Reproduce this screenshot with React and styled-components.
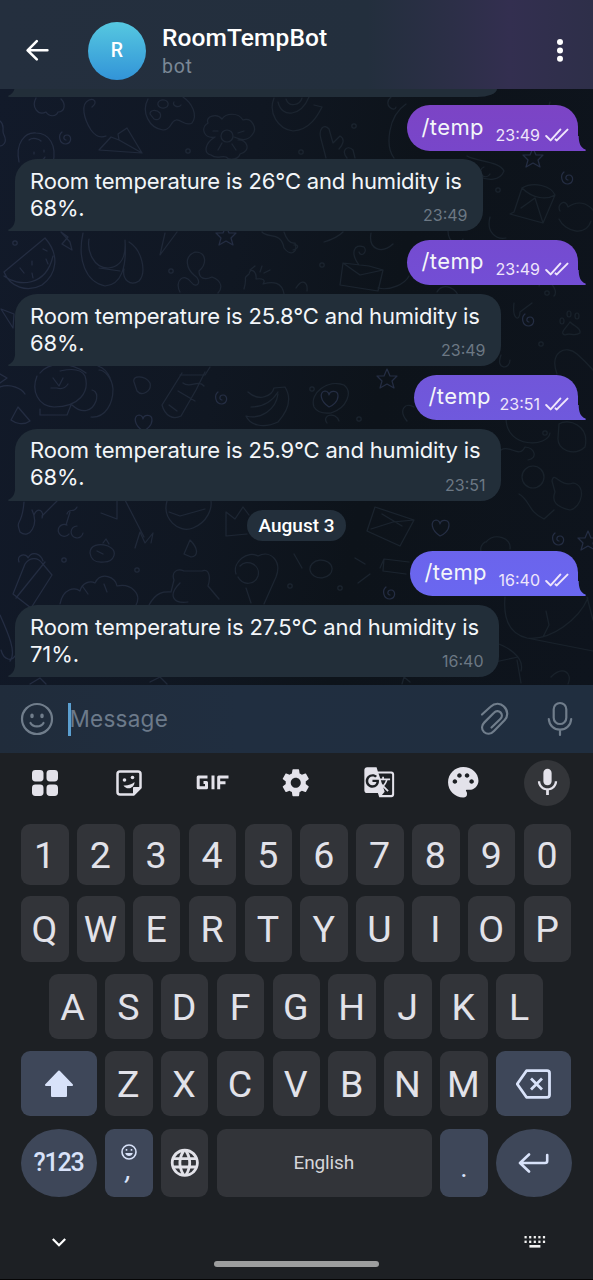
import React from "react";
import styled, { createGlobalStyle } from "styled-components";
import { MdSettings, MdPalette, MdGTranslate, MdMic, MdLanguage } from "react-icons/md";

const GlobalStyle = createGlobalStyle`
  * { box-sizing: border-box; }
  body { margin: 0; background: #1d2024; }
`;

const chatFont = `Inter, "Noto Sans", sans-serif`;
const systemFont = `Roboto, "Liberation Sans", sans-serif`;

const Screen = styled.div`
  width: 593px;
  height: 1280px;
  display: flex;
  flex-direction: column;
  overflow: hidden;
  background: #1d2024;
  font-family: ${chatFont};
`;

/* ---------- header ---------- */

const Header = styled.header`
  height: 89px;
  flex: none;
  display: flex;
  align-items: center;
  padding: 12px 18px 0 22px;
  background: linear-gradient(90deg, #242f3e 0%, #232f3d 62%, #2c2f47 76%, #332f50 86%, #2e2f49 100%);
`;

const HeaderIcon = styled.svg`
  width: ${(p) => p.$w}px;
  height: 32px;
  flex: none;
`;

const Avatar = styled.div`
  width: 58px;
  height: 58px;
  margin-left: 34px;
  border-radius: 50%;
  display: flex;
  align-items: center;
  justify-content: center;
  background: linear-gradient(#56c8e0, #3294d8);
  color: #fff;
  font: 500 19.5px/1 ${systemFont};
`;

const Identity = styled.div`
  flex: 1;
  margin-left: 16px;
  display: flex;
  flex-direction: column;
`;

const Title = styled.div`
  font: 500 24.5px/30px ${systemFont};
  letter-spacing: 0.1px;
  color: #fff;
`;

const Subtitle = styled.div`
  font: 400 19.5px/25px ${systemFont};
  letter-spacing: 0.7px;
  margin-top: 1px;
  margin-bottom: -1px;
  color: #7b8896;
`;

/* ---------- chat ---------- */

const Chat = styled.main`
  position: relative;
  height: 595.5px;
  flex: none;
  overflow: hidden;
  background: linear-gradient(100deg, #121a2a 0%, #101722 38%, #0d131a 62%, #0e141d 100%);
`;

const Wallpaper = styled.svg`
  position: absolute;
  inset: 0;
  width: 593px;
  height: 596px;
`;

const Messages = styled.div`
  position: relative;
  display: flex;
  flex-direction: column;
  gap: 8.7px;
  padding: 0 15px;
`;

const Bubble = styled.div`
  position: relative;
  display: flex;
  width: ${(p) => p.$w}px;
`;

const Incoming = styled(Bubble)`
  align-self: flex-start;
  height: 71.8px;
  padding: 8.5px 0 0 15px;
  border-radius: 22px 20px 20px 0;
  background: #222e39;
`;

const Outgoing = styled(Bubble)`
  align-self: flex-end;
  height: 45.5px;
  justify-content: space-between;
  padding: 8.5px 9px 0 14.5px;
  border-radius: 23px 22px 0 23px;
  background: ${(p) => p.$color};
`;

const PreviousBubble = styled.div`
  position: relative;
  width: 482px;
  height: 7.5px;
  border-radius: 0 0 20px 0 / 0 0 8px 0;
  background: #222e39;
`;

const TailShape = styled.svg`
  position: absolute;
  bottom: 0;
  width: 8px;
  height: 15px;
  ${(p) => (p.$side === "left" ? "left: -7.5px;" : "right: -7.5px; transform: scaleX(-1);")}
`;

const Body = styled.div`
  font-size: 22px;
  line-height: 27px;
  letter-spacing: ${(p) => p.$ls || 0}px;
  color: #f3f6f9;
  white-space: nowrap;
`;

const Line = styled.div`
  width: max-content;
`;

const Stamp = styled.div`
  font-size: 16px;
  line-height: 20px;
  white-space: nowrap;
`;

const IncomingStamp = styled(Stamp)`
  position: absolute;
  right: 15.5px;
  bottom: 6px;
  color: #6c7884;
`;

const OutgoingMeta = styled.div`
  display: flex;
  align-items: center;
  gap: 5px;
  height: 20px;
  margin-top: 11px;
  color: #efe6fb;
`;

const DatePill = styled.div`
  align-self: center;
  width: 99px;
  height: 31px;
  margin: 1px 0;
  border-radius: 16px;
  background: #232f3b;
  color: #fff;
  text-align: center;
  font: 500 19px/31px ${systemFont};
`;

/* ---------- composer ---------- */

const Composer = styled.div`
  height: 68px;
  flex: none;
  display: flex;
  align-items: center;
  padding: 1.5px 20px 0 20px;
  background: linear-gradient(90deg, #202c3b, #202e40 40%, #202e3f);
`;

const ComposerIcon = styled.svg`
  width: ${(p) => p.$w}px;
  height: 36px;
  flex: none;
  fill: none;
  stroke: #707d8b;
  stroke-width: 2.2;
  stroke-linecap: round;
  stroke-linejoin: round;
`;

const ClipIcon = styled(ComposerIcon)`
  margin-right: 37px;
`;

const Caret = styled.div`
  width: 3px;
  height: 33px;
  margin-left: 14px;
  background: #5b9fd0;
`;

const Placeholder = styled.div`
  flex: 1;
  margin-left: -1.5px;
  font-size: 22.5px;
  line-height: 30px;
  letter-spacing: 0.25px;
  color: #6c7a8a;
`;

/* ---------- keyboard ---------- */

const Keyboard = styled.section`
  flex: 1;
  display: flex;
  flex-direction: column;
  background: #1d2024;
  border-bottom: 1px solid #050506;
`;

const Toolbar = styled.div`
  display: flex;
  justify-content: space-between;
  padding: 7px 23px 0;
  color: #e3e2ea;
`;

const Tool = styled.div`
  width: 46px;
  height: 46px;
  display: flex;
  align-items: center;
  justify-content: center;
  padding-right: ${(p) => (p.$active ? 0 : 1.4)}px;
  border-radius: 50%;
  background: ${(p) => (p.$active ? "#333539" : "transparent")};
`;

const KeyRow = styled.div`
  display: flex;
  padding-left: ${(p) => p.$inset || 21.2}px;
  gap: 8.3px;
  height: ${(p) => p.$h}px;
  margin-top: ${(p) => p.$top}px;
`;

const Key = styled.div`
  width: ${(p) => p.$w || 47.55}px;
  flex: none;
  display: flex;
  flex-direction: column;
  align-items: center;
  justify-content: center;
  border-radius: ${(p) => (p.$round ? "38px / 34px" : "9px")};
  background: ${(p) => (p.$accent ? "#3e4759" : "#323439")};
  color: ${(p) => (p.$accent ? "#d8e2f9" : "#e2e2e9")};
  font-family: ${systemFont};
  font-size: 37.5px;
  line-height: 1;
`;

const CharKey = styled(Key)`
  padding: 2.5px 1px 0 0;
`;

const SmallLabel = styled.span`
  font-size: 19px;
  letter-spacing: -0.15px;
  margin-right: 1px;
  color: #d5d6da;
`;

const ModeLabel = styled.span`
  font-size: 25px;
  font-weight: 500;
  letter-spacing: -1.2px;
  margin-right: 1px;
`;

const Comma = styled.span`
  font-size: 28px;
  line-height: 24px;
  margin-top: -2px;
  font-style: italic;
`;

const Period = styled.span`
  margin-top: 10px;
  font-size: 28px;
`;

const SystemNav = styled.div`
  display: flex;
  justify-content: space-between;
  padding: 0 47.5px 0 51px;
  margin-top: 36px;
`;

const HomeBar = styled.div`
  align-self: center;
  width: 165px;
  height: 6px;
  margin-top: 10px;
  border-radius: 3px;
  background: #9d9e9f;
`;

function Tail({ side, color }) {
  return (
    <TailShape $side={side} viewBox="0 0 8 15">
      <path d="M7.3 0C7.3 7 5.5 11.5 .6 13.6C-.1 14 .1 15 1 15H8V0Z" fill={color} />
    </TailShape>
  );
}

function Ticks() {
  return (
    <svg width="24" height="14" viewBox="0 0 24 14" fill="none" stroke="currentColor" strokeWidth="2" strokeLinecap="round" strokeLinejoin="round">
      <path d="M1.2 8L5.6 12.4L15.3 1.6M10.6 11.4L11.8 12.4L22.5 1.6" />
    </svg>
  );
}

function Reply({ width, lines, time, spacing = -0.17 }) {
  return (
    <Incoming $w={width}>
      <Tail side="left" color="#222e39" />
      <Body $ls={spacing}>
        {lines.map((line) => (
          <Line key={line}>{line}</Line>
        ))}
      </Body>
      <IncomingStamp>{time}</IncomingStamp>
    </Incoming>
  );
}

function Command({ width, color, end = color, time }) {
  return (
    <Outgoing $w={width} $color={`linear-gradient(${color}, ${end})`}>
      <Tail side="right" color={end} />
      <Body $ls={0.4}>/temp</Body>
      <OutgoingMeta>
        <Stamp>{time}</Stamp>
        <Ticks />
      </OutgoingMeta>
    </Outgoing>
  );
}

const spirals = [[66, 139], [222, 399], [568, 179], [529, 321], [559, 540], [390, 594]];
const dots = [[188, 151], [15, 243], [171, 271], [354, 126], [301, 152], [498, 190], [322, 265], [64, 560], [137, 570], [290, 586], [340, 588], [545, 433], [359, 419], [312, 389], [541, 344], [547, 293]];
const stars = [[226, 236], [387, 379], [533, 158], [588, 541]];
const hearts = [[329, 399], [440, 528], [143, 423]];

function Doodles() {
  return (
    <Wallpaper viewBox="0 89 593 596" fill="none" strokeWidth="1.2" strokeLinecap="round" strokeLinejoin="round">
      <defs>
        <linearGradient id="ink" x1="0" x2="593" y1="0" y2="0" gradientUnits="userSpaceOnUse">
          <stop offset="0" stopColor="#242d43" />
          <stop offset="0.5" stopColor="#1b242f" />
          <stop offset="1" stopColor="#18212a" />
        </linearGradient>
      </defs>
      <g stroke="url(#ink)">
        {spirals.map(([x, y]) => (
          <path key={x} transform={`translate(${x} ${y})`} d="M0 1C-3 1 -3 -4 1 -4C6 -4 6 4 0 5C-7 5 -8 -4 -4 -7" />
        ))}
        {dots.map(([x, y]) => (
          <circle key={x + y} cx={x} cy={y} r="2.2" />
        ))}
        {stars.map(([x, y]) => (
          <path key={x} transform={`translate(${x} ${y})`} d="M0 -10L3 -3L10 -3L5 2L7 9L0 5L-7 9L-5 2L-10 -3L-3 -3Z" />
        ))}
        {hearts.map(([x, y]) => (
          <path key={x} transform={`translate(${x} ${y})`} d="M0 8C-9 2 -10 -7 -4 -8C-1 -8 0 -5 0 -4C1 -9 9 -9 9 -3C9 3 3 7 0 8Z" />
        ))}
        {/* ghost, flower, feather and paper plane */}
        <path d="M19 162C15 143 25 132 36 133C49 133 57 145 53 163M29 140C33 137 39 139 41 141M34 152V154M44 150V152M35 160C39 162 44 160 45 157" />
        <path d="M36 98C31 107 38 116 46 112C49 117 56 117 58 112C65 112 66 104 61 99M92 107C98 102 94 98 89 100C80 104 84 119 91 130C96 137 101 138 106 136M99 150L142 153L127 128L118 134L119 140L111 137ZM119 140L142 153" />
        {/* palette */}
        <path d="M148 99C141 112 149 128 163 130C172 130 170 121 176 120C181 119 186 127 192 123C198 115 192 103 183 97M150 114C150 110 156 109 160 113C162 118 158 121 154 119ZM158 103A5 4 0 1 0 168 105A5 4 0 1 0 158 103M174 102A4 3 0 1 0 181 105" />
        {/* blossom */}
        <path d="M215 137C204 139 200 128 208 123C205 116 217 113 222 119C226 113 238 112 243 120C252 117 258 129 252 135C245 144 236 137 234 137M215 137C205 143 203 153 211 155C217 160 222 155 226 157C231 162 239 158 240 154C252 151 247 139 238 140M221 136A6 6 0 1 0 233 136A6 6 0 1 0 221 136M213 131H218M238 133L244 131M222 143L218 150M232 144L236 150" />
        {/* doughnut and cactus */}
        <path d="M274 98C268 113 278 129 293 131C310 130 318 115 322 107L314 105M278 102C282 119 301 116 309 97M286 99C289 108 300 105 302 98M326 158L321 139C318 129 324 123 329 129L333 143L340 136C346 139 342 146 339 149M347 158C341 151 347 144 353 150L355 158M391 97C382 105 395 113 396 107M394 158C385 146 388 116 406 104M550 102C545 116 560 125 569 111M467 156C478 162 499 161 504 171C500 181 488 181 478 176M484 167A5 5 0 1 0 490 174" />
        {/* watermelon, sweet and hedgehog */}
        <path d="M4 272L45 238C60 255 57 274 42 285C27 293 10 287 4 272ZM4 276C18 287 46 287 53 256M43 249L47 251M32 261V265M46 259L48 264M20 268L24 273M32 273L33 278M61 232L68 237L62 244L72 250L70 242ZM83 233C77 260 86 282 105 286C121 285 127 268 125 240M89 239C87 250 93 268 108 268C122 267 126 255 125 241M129 242C142 250 147 272 139 281C130 287 122 279 124 269M99 268L120 271M165 233L160 255L177 232" />
        {/* balloon figure */}
        <path d="M180 292C174 281 184 272 191 282C197 290 203 281 194 275C187 269 183 257 195 252C207 252 207 264 199 271C199 279 205 280 212 277C223 281 222 289 218 293M244 289C248 275 242 280 249 274C250 267 257 271 256 279C263 278 266 280 263 284C273 281 282 282 284 294M255 266L250 270M262 266L260 272M270 270L264 273M262 232C268 239 281 231 284 248C291 257 298 252 295 243C289 244 286 238 284 232" />
        {/* envelopes and cupcakes */}
        <path d="M343 263L340 285L378 291L383 270L369 266ZM343 263L360 275L383 270M359 265C350 253 354 243 364 247C368 252 361 258 359 252M371 233C368 250 382 254 393 244M378 288C390 291 405 284 409 276M324 242C334 239 341 234 343 232M293 250C300 248 298 244 294 245M296 288C302 278 308 282 307 291M514 212L522 188C534 181 551 186 555 195L543 223L510 214ZM522 188C533 199 547 200 555 195M521 208L535 198L543 223M560 211C556 204 566 198 568 207C578 200 587 203 593 210M559 219C565 232 586 237 591 221M490 217C486 232 496 240 506 238M448 231C448 242 460 250 463 239M539 286C545 272 560 290 554 296" />
        {/* paw print */}
        <path d="M570 322C566 328 559 333 565 335C570 332 574 337 580 333C581 328 575 327 570 322ZM562 318A2 3 0 1 0 562 324A2 3 0 1 0 562 318M569 311A2 3 0 1 0 569 317A2 3 0 1 0 569 311M577 313A2 3 0 1 0 577 319A2 3 0 1 0 577 313" />
        <path d="M557 374C549 352 566 344 577 354C586 362 593 370 593 370M514 303C512 320 520 322 520 312L532 303M501 355C495 370 510 370 510 360" />
        {/* sleeping cat */}
        <path d="M37 376C31 391 38 406 54 407C79 407 90 392 85 376C80 366 65 370 60 371M53 378L59 386L63 378M51 388H57C63 390 66 387 68 384M40 409V415H67L71 405M72 405C82 414 92 412 96 401C99 391 92 390 92 390M91 417C106 418 113 403 113 389C112 377 104 370 99 370M0 387C11 383 22 389 25 394M11 420L18 407L30 421C23 426 15 423 11 420ZM0 374L7 378L0 383" />
        {/* sock, bottle, bananas */}
        <path d="M134 382C132 375 145 375 150 383C152 391 142 397 137 391ZM182 373L162 405C165 416 173 420 181 416L196 390L205 372M183 383C190 389 198 379 204 386M178 391L195 401M169 405L177 411M248 392C259 402 272 396 274 388L285 387C293 400 287 412 278 422C263 429 250 425 246 416C260 420 276 410 278 394M251 407C264 407 273 400 278 392M314 407C309 393 328 379 344 385C353 392 347 408 331 413C322 414 317 412 314 407ZM327 423C321 415 336 411 339 421M407 421C398 410 405 402 414 407" />
        {/* sprout, cherries, burger, crown */}
        <path d="M24 502C22 528 15 518 20 532C30 540 39 524 32 510M34 515C37 506 45 511 42 518M42 516L57 501M67 514C69 507 74 514 77 507M70 512L66 525M67 525A6 6 0 1 0 69 534M77 526A6 6 0 1 0 83 533M117 500V519L101 513M125 500L144 537M135 548L140 532L145 543L153 533L151 543M167 501C162 518 178 534 193 528C208 522 212 508 211 501M169 512L180 516L205 509M226 512L235 519L243 507L249 515M226 512V536L247 534" />
        {/* strawberry faces, cake, cloud, ice cream */}
        <path d="M90 553C90 545 99 543 108 546C119 551 114 562 104 562C96 563 91 560 90 553ZM103 543L106 539L109 544M97 551L103 554M184 554L190 540C198 548 199 556 191 557ZM13 594L25 564C29 558 37 556 42 563L52 575L31 608L13 594ZM19 562C16 554 27 553 28 558C32 550 41 554 43 561M16 598L45 562M60 604C63 588 75 587 80 591C82 583 90 580 95 583C101 571 116 577 117 586C131 583 142 594 136 605M83 587L88 594M104 584L107 592M149 605C157 590 166 592 171 592L174 580C171 572 177 568 184 571H202C209 568 211 577 208 586L219 599M180 583C167 596 174 604 188 602M236 574C232 562 248 550 258 556C271 549 282 562 276 577L264 604M238 577C243 586 255 585 258 576C261 565 247 558 240 566M246 588L251 603" />
        {/* letter, firework, planet */}
        <path d="M375 507L367 531L400 546L414 520ZM371 529L393 522L414 520M382 514L402 526M358 583L370 574M294 554L302 568M310 570A10 8 0 1 0 332 568A10 8 0 1 0 310 570M355 558L365 564M380 568L384 559L409 562M384 559L383 571L406 574M506 419C507 449 548 447 550 433M501 450C510 444 519 459 525 447C535 448 538 458 528 460M552 481C554 470 560 488 573 483C587 485 582 508 570 510C557 507 551 502 555 492ZM519 494C530 500 528 512 544 519L554 510M522 477A11 11 0 1 0 544 477A11 11 0 1 0 522 477M559 424C568 418 590 425 585 447C574 457 557 450 558 438ZM485 542C476 549 483 560 492 558M486 542C495 532 512 538 510 549" />
        {/* hot-air balloon and sparks */}
        <path d="M505 597C503 620 510 634 527 638C551 641 579 619 588 598M527 638L593 651M587 597L593 620M546 611L549 625L543 637M517 660L521 683M551 677C563 665 573 673 568 684M495 662L518 657M493 642C507 646 525 657 521 671M30 684L40 678L46 684M150 682L160 677L167 684M402 684L404 677L410 682M0 615C8 633 17 653 10 661M1 650C4 661 12 661 15 656" />
        <path d="M0 121C6 126 1 130 4 135C8 143 2 146 0 146M1 309L14 314L13 328ZM40 373C48 363 68 360 86 373M98 366C104 368 108 373 110 378M180 375L205 375L210 367M350 340C358 325 376 339 366 350M437 292C442 281 460 289 458 299" />
      </g>
    </Wallpaper>
  );
}

const rows = ["1234567890", "QWERTYUIOP", "ASDFGHJKL", "ZXCVBNM"].map((r) => r.split(""));

export default function App() {
  return (
    <Screen>
      <GlobalStyle />
      <Header>
        <HeaderIcon $w={32} viewBox="0 0 32 32" fill="none" stroke="#fff" strokeWidth="2.6" strokeLinecap="round" strokeLinejoin="round">
          <path d="M14.8 6.2L5.6 15.3L14.8 24.4M6 15.3H25.4" />
        </HeaderIcon>
        <Avatar>R</Avatar>
        <Identity>
          <Title>RoomTempBot</Title>
          <Subtitle>bot</Subtitle>
        </Identity>
        <HeaderIcon $w={30} viewBox="0 0 30 32" fill="#fff">
          <circle cx="15" cy="7" r="3" />
          <circle cx="15" cy="15.4" r="3" />
          <circle cx="15" cy="23.8" r="3" />
        </HeaderIcon>
      </Header>

      <Chat>
        <Doodles />
        <Messages>
          <PreviousBubble>
            <Tail side="left" color="#222e39" />
          </PreviousBubble>
          <Command width={171} color="#7c44c5" end="#7846ca" time="23:49" />
          <Reply width={468} lines={["Room temperature is 26°C and humidity is", "68%."]} time="23:49" />
          <Command width={171} color="#754bd0" end="#734ed5" time="23:49" />
          <Reply width={486} lines={["Room temperature is 25.8°C and humidity is", "68%."]} time="23:49" />
          <Command width={164} color="#7156d9" end="#6f59dd" time="23:51" />
          <Reply width={486} lines={["Room temperature is 25.9°C and humidity is", "68%."]} time="23:51" />
          <DatePill>August 3</DatePill>
          <Command width={168} color="#6b64ec" end="#6a67f0" time="16:40" />
          <Reply width={484} lines={["Room temperature is 27.5°C and humidity is", "71%."]} time="16:40" spacing={-0.12} />
        </Messages>
      </Chat>

      <Composer>
        <ComposerIcon $w={34} viewBox="0 0 34 36">
          <circle cx="17" cy="18" r="15" />
          <path d="M10.5 22C13 26.5 21 26.5 23.5 22" />
          <path d="M12 14.2V15.6M22 14.2V15.6" strokeWidth="3.4" />
        </ComposerIcon>
        <Caret />
        <Placeholder>Message</Placeholder>
        <ClipIcon $w={30} viewBox="0 0 30 36">
          <path d="M2 13.5L10.5 5.8C15 1.5 20.5 2 24 5.6C28.5 10 28 15.5 24.5 19.2L14 30C10.8 33.5 6.8 33.5 4 31C1.3 28.3 1.3 24.5 4.4 21.4L14 11.8C16 9.7 18.7 9.6 20.5 11.4C22.4 13.3 22.3 16 20.3 18L11.5 26.5" />
        </ClipIcon>
        <ComposerIcon $w={26} viewBox="0 0 26 36">
          <rect x="6.7" y="2" width="12.6" height="21" rx="6.3" />
          <path d="M1.8 18C2.2 24.5 7 28.7 13 28.7S23.8 24.5 24.2 18M13 29V34" />
        </ComposerIcon>
      </Composer>

      <Keyboard>
        <Toolbar>
          <Tool>
            <svg width="26" height="26" viewBox="0 0 26 26" fill="currentColor">
              <rect width="11.5" height="11.5" rx="3.4" />
              <rect x="14.5" width="11.5" height="11.5" rx="3.4" />
              <rect y="14.5" width="11.5" height="11.5" rx="3.4" />
              <rect x="14.5" y="14.5" width="11.5" height="11.5" rx="3.4" />
            </svg>
          </Tool>
          <Tool>
            <svg width="26" height="26" viewBox="0 0 26 26" fill="none" stroke="currentColor" strokeWidth="2.5" strokeLinejoin="round">
              <path d="M4 1.5H22Q24.5 1.5 24.5 4V17.5L17.5 24.5H4Q1.5 24.5 1.5 22V4Q1.5 1.5 4 1.5Z" />
              <path d="M17.5 24.5V17.5H24.5Z" fill="currentColor" strokeWidth="1" />
              <circle cx="8.5" cy="10" r="1.8" fill="currentColor" stroke="none" />
              <circle cx="16.5" cy="7.5" r="1.8" fill="currentColor" stroke="none" />
              <path d="M7.5 15.5C11 16 16 14.5 18.5 12C18.5 18.5 10.5 20.5 7.5 15.5Z" fill="currentColor" stroke="none" />
            </svg>
          </Tool>
          <Tool>
            <svg width="33" height="15" viewBox="0 0 33 15" fill="none" stroke="currentColor" strokeWidth="3" strokeLinejoin="round">
              <path d="M11.5 2H2.2V12.8H10.5V7.5H7.5M17 .5V14.3M22.7 14.3V2H32.5M22.7 7.8H29.5" />
            </svg>
          </Tool>
          <Tool><MdSettings size={33.5} /></Tool>
          <Tool><MdGTranslate size={32.5} /></Tool>
          <Tool><MdPalette size={36.5} /></Tool>
          <Tool $active><MdMic size={33} /></Tool>
        </Toolbar>

        <KeyRow $h={61} $top={18.5}>
          {rows[0].map((k) => <CharKey key={k}>{k}</CharKey>)}
        </KeyRow>
        <KeyRow $h={65.5} $top={11}>
          {rows[1].map((k) => <CharKey key={k}>{k}</CharKey>)}
        </KeyRow>
        <KeyRow $h={65} $top={12.3} $inset={49.2}>
          {rows[2].map((k) => <CharKey key={k}>{k}</CharKey>)}
        </KeyRow>
        <KeyRow $h={65.5} $top={12.2}>
          <Key $w={75.5} $accent>
            <svg width="30" height="28" viewBox="0 0 30 28" fill="currentColor" stroke="currentColor" strokeWidth="2" strokeLinejoin="round">
              <path d="M15 1.5L28 15H22V26H8V15H2Z" />
            </svg>
          </Key>
          {rows[3].map((k) => <CharKey key={k}>{k}</CharKey>)}
          <Key $w={75.5} $accent>
            <svg width="36" height="30" viewBox="0 0 36 30" fill="none" stroke="currentColor" strokeWidth="2.8" strokeLinejoin="round">
              <path d="M10.5 1.7H31Q33.5 1.7 33.5 4V26Q33.5 28.3 31 28.3H10.5L1.2 15Z" />
              <path d="M15 9.5L26 20.5M26 9.5L15 20.5" />
            </svg>
          </Key>
        </KeyRow>
        <KeyRow $h={68} $top={12.3}>
          <Key $w={75.5} $accent $round><ModeLabel>?123</ModeLabel></Key>
          <Key $accent>
            <svg width="16" height="16" viewBox="0 0 16 16" fill="none" stroke="currentColor" strokeWidth="1.6">
              <circle cx="8" cy="8" r="7" />
              <path d="M4.2 9H11.8C11 13 5 13 4.2 9Z" fill="currentColor" stroke="none" />
              <path d="M5.5 5V6.8M10.5 5V6.8" />
            </svg>
            <Comma>,</Comma>
          </Key>
          <Key><MdLanguage size={33.6} /></Key>
          <Key $w={215.2}><SmallLabel>English</SmallLabel></Key>
          <Key $accent><Period>.</Period></Key>
          <Key $w={75.5} $accent $round>
            <svg width="31" height="20" viewBox="0 0 31 20" fill="none" stroke="currentColor" strokeWidth="2.6" strokeLinecap="round" strokeLinejoin="round">
              <path d="M11 1.5L2 10L11 18.5M2.5 10H27Q29.2 10 29.2 8V2" />
            </svg>
          </Key>
        </KeyRow>

        <SystemNav>
          <svg width="16" height="18" viewBox="0 0 16 18" fill="none" stroke="#fff" strokeWidth="2.2">
            <path d="M1.8 6L8 12.2L14.2 6" />
          </svg>
          <svg width="22" height="18" viewBox="0 0 22 18" fill="#f1f1f1">
            {[0, 1, 2, 3, 4].map((i) => (
              <g key={i}>
                <rect x={0.5 + i * 4.6} y="3" width="2.2" height="2.4" />
                <rect x={0.5 + i * 4.6} y="7.6" width="2.2" height="2.4" />
              </g>
            ))}
            <rect x="5.4" y="12" width="11" height="2.6" />
          </svg>
        </SystemNav>
        <HomeBar />
      </Keyboard>
    </Screen>
  );
}
